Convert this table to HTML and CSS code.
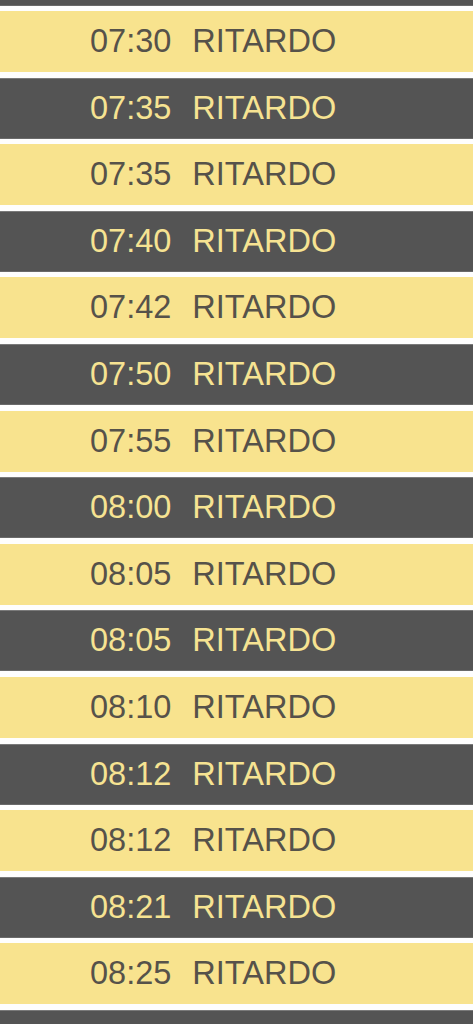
FILE: index.html
```html
<!DOCTYPE html>
<html lang="it">

<head>
    <meta charset="UTF-8">
    <title>Ritardi</title>
    <link rel="stylesheet" href="styles.css">
</head>

<body>
    <div class="board">
        <div class="row dark"></div>
        <div class="row light"><span class="time">07:30</span><span class="status">RITARDO</span></div>
        <div class="row dark"><span class="time">07:35</span><span class="status">RITARDO</span></div>
        <div class="row light"><span class="time">07:35</span><span class="status">RITARDO</span></div>
        <div class="row dark"><span class="time">07:40</span><span class="status">RITARDO</span></div>
        <div class="row light"><span class="time">07:42</span><span class="status">RITARDO</span></div>
        <div class="row dark"><span class="time">07:50</span><span class="status">RITARDO</span></div>
        <div class="row light"><span class="time">07:55</span><span class="status">RITARDO</span></div>
        <div class="row dark"><span class="time">08:00</span><span class="status">RITARDO</span></div>
        <div class="row light"><span class="time">08:05</span><span class="status">RITARDO</span></div>
        <div class="row dark"><span class="time">08:05</span><span class="status">RITARDO</span></div>
        <div class="row light"><span class="time">08:10</span><span class="status">RITARDO</span></div>
        <div class="row dark"><span class="time">08:12</span><span class="status">RITARDO</span></div>
        <div class="row light"><span class="time">08:12</span><span class="status">RITARDO</span></div>
        <div class="row dark"><span class="time">08:21</span><span class="status">RITARDO</span></div>
        <div class="row light"><span class="time">08:25</span><span class="status">RITARDO</span></div>
        <div class="row dark"></div>
    </div>
</body>

</html>
```

FILE: styles.css
```css
* {
    margin: 0;
    padding: 0;
    box-sizing: border-box;
}

html,
body {
    background: #fefefe;
    overflow: hidden;
}

body {
    font-family: "Liberation Sans", Arial, sans-serif;
}

.board {
    display: flex;
    flex-direction: column;
    gap: 5.6px;
    margin-top: -55.5px;
}

.row {
    display: flex;
    align-items: center;
    flex-shrink: 0;
    height: 61px;
    padding: 0 0 0 90px;
    font-size: 32.5px;
    white-space: nowrap;
}

.light {
    background: #f8e38e;
    color: #56524a;
}

.dark {
    background: #545454;
    color: #f6e392;
    border-top: 1px solid #7a7a7a;
    border-bottom: 1px solid #6a6a6a;
}

.time {
    margin-right: 21px;
}
```
